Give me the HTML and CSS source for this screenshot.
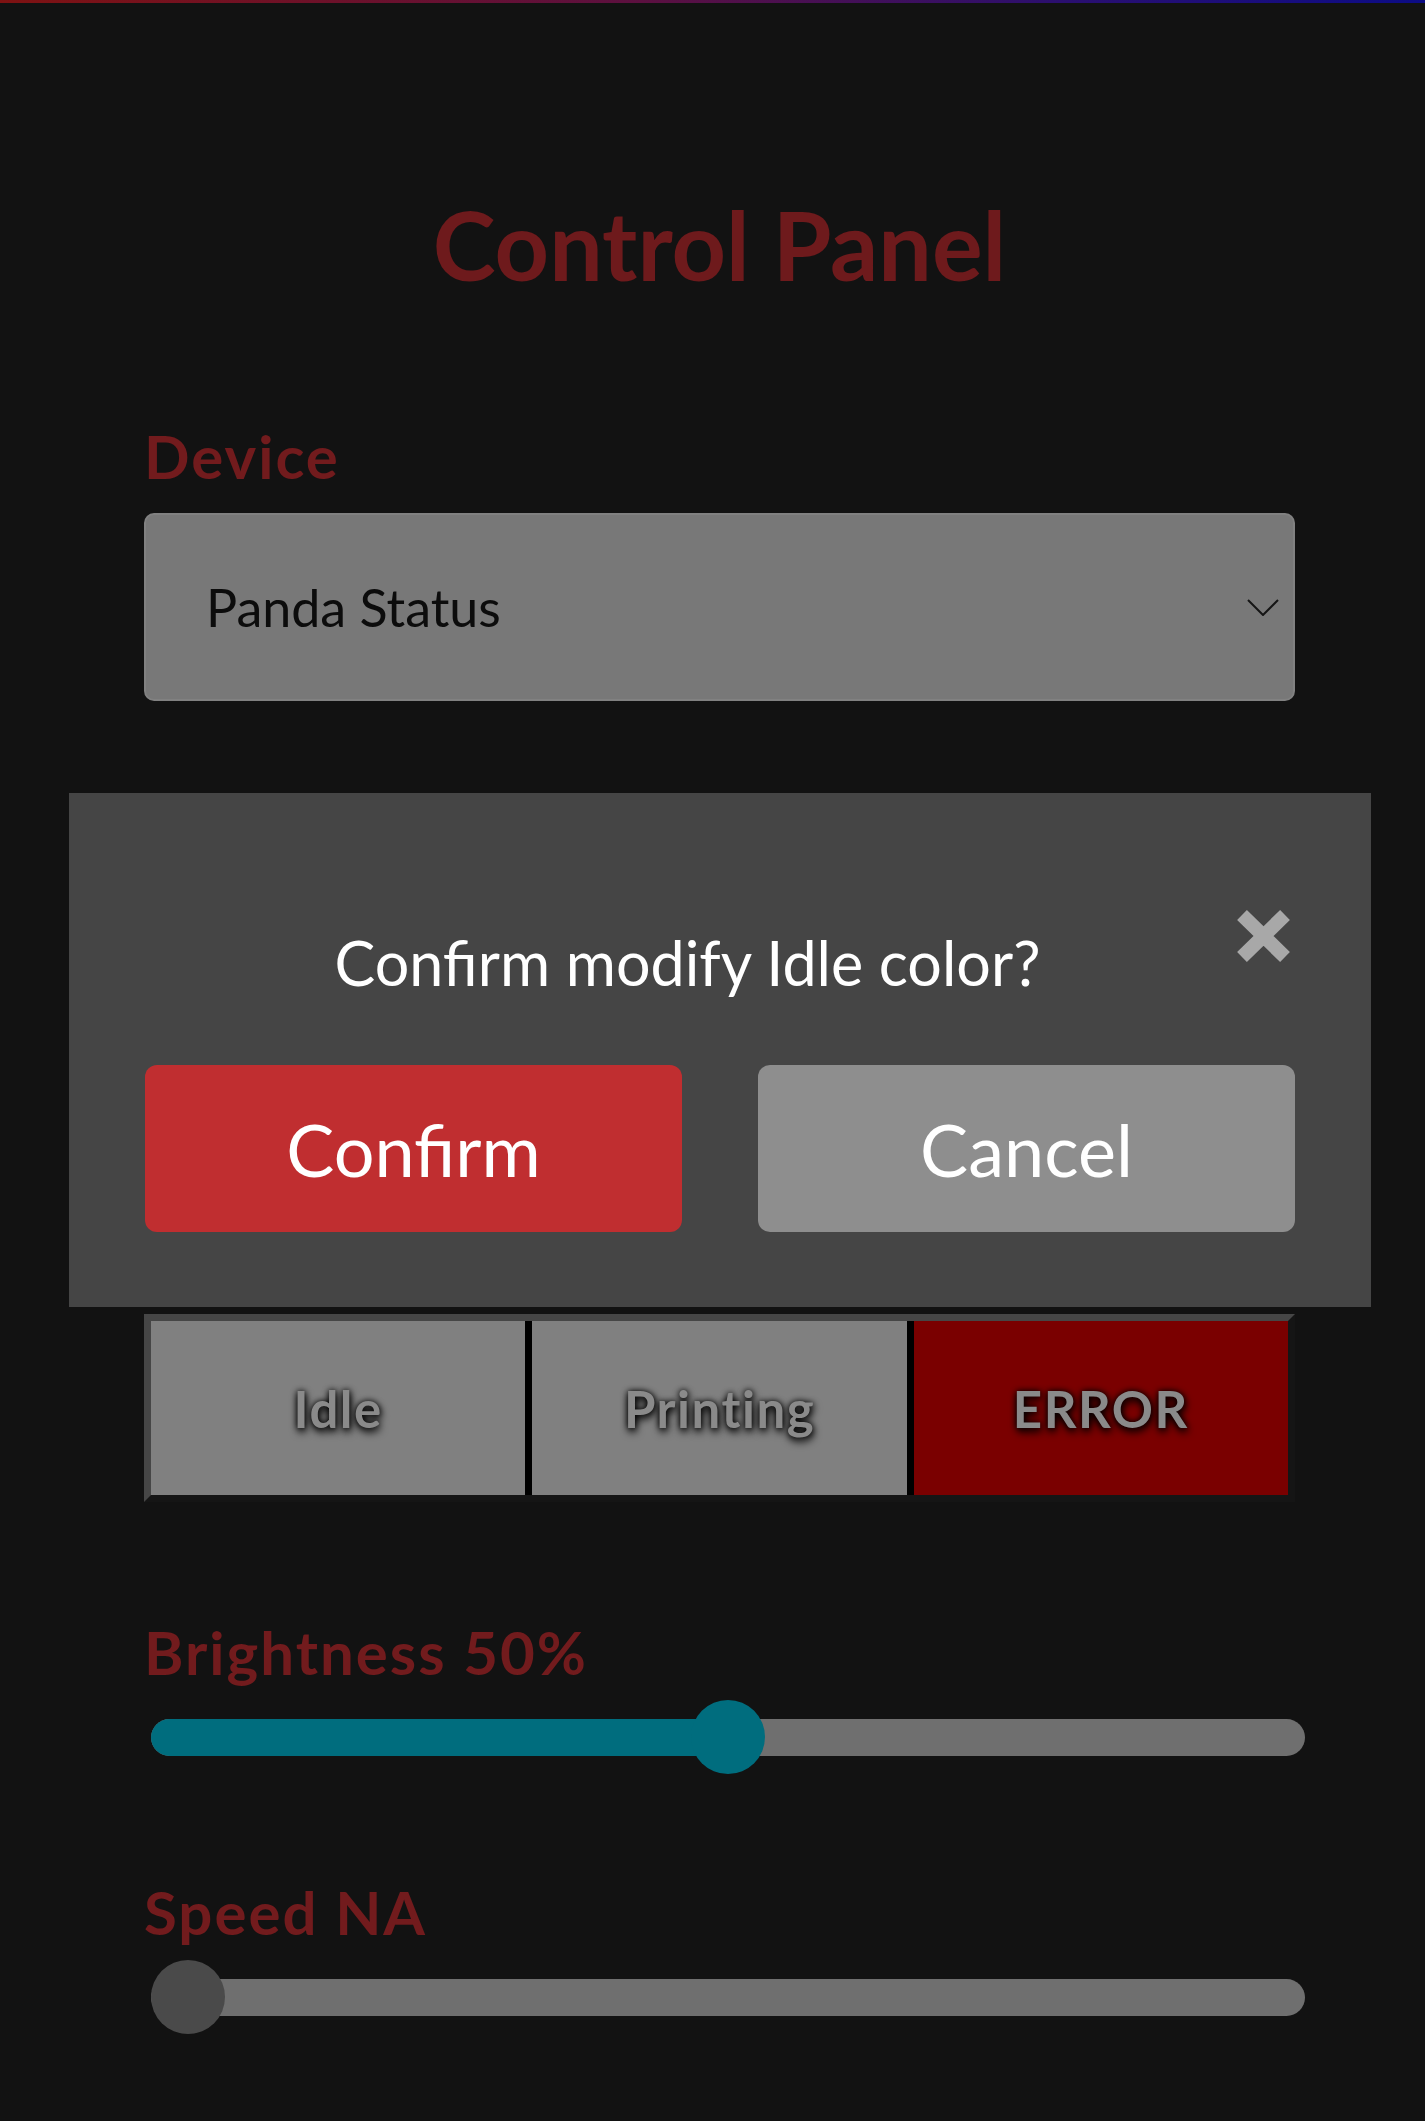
FILE: index.html
```html
<!DOCTYPE html>
<html lang="en">
<head>
<meta charset="utf-8">
<title>Control Panel</title>
<link rel="stylesheet" href="styles.css">
</head>
<body>
<div class="topbar"></div>
<main class="page">
  <h1 class="title">Control Panel</h1>

  <label class="label label-device">Device</label>
  <div class="select">
    <span class="select-text">Panda Status</span>
    <svg class="chev" width="32" height="17" viewBox="0 0 32 17"><polyline points="1,1 16,16 31,1" fill="none" stroke="#151515" stroke-width="2"/></svg>
  </div>

  <div class="status-group">
    <div class="status">Idle</div>
    <div class="status">Printing</div>
    <div class="status status-error">ERROR</div>
  </div>

  <label class="label label-bright">Brightness 50%</label>
  <div class="slider">
    <div class="track"><div class="fill" style="width:50%"></div></div>
    <div class="thumb thumb-active" style="left:calc((100% - 74px) * 0.5)"></div>
  </div>

  <label class="label label-speed">Speed NA</label>
  <div class="slider">
    <div class="track"></div>
    <div class="thumb thumb-off" style="left:0"></div>
  </div>
</main>

<div class="modal">
  <div class="modal-head">
    <p class="modal-text">Confirm modify Idle color?</p>
    <svg class="close" width="53" height="52" viewBox="0 0 53 52"><path d="M5 5 L48 47 M48 5 L5 47" stroke="#a8a8a8" stroke-width="14" stroke-linecap="butt"/></svg>
  </div>
  <div class="modal-actions">
    <button class="btn btn-confirm">Confirm</button>
    <button class="btn btn-cancel">Cancel</button>
  </div>
</div>
</body>
</html>
```

FILE: styles.css
```css
html, body {
  margin: 0;
  padding: 0;
  background: #121212;
}
body {
  font-family: Lato, "Noto Sans", sans-serif;
  position: relative;
  min-height: 2121px;
}
.topbar {
  height: 3px;
  background: linear-gradient(90deg, #7e1212 0%, #5c1040 45%, #2a0f70 75%, #0c0c86 100%);
}
.page {
  padding: 0 130px 0 144px;
  display: flex;
  flex-direction: column;
}
.title {
  margin: 194px 0 0 0;
  font-size: 95px;
  line-height: 1;
  font-weight: 700;
  text-align: center;
  color: #6e1a1c;
}
.label {
  display: block;
  font-size: 60px;
  line-height: 1;
  font-weight: 700;
  letter-spacing: 2px;
  color: #721b1d;
}
.label-device { margin-top: 134px; }
.select {
  margin-top: 27px;
  height: 184px;
  box-sizing: content-box;
  border: 2px solid #818181;
  border-radius: 10px;
  background: #787878;
  display: flex;
  align-items: center;
  justify-content: space-between;
  padding: 0 14px 0 60px;
}
.select-text {
  font-size: 52px;
  color: #0c0c0c;
}
.chev { display: block; }
.status-group {
  margin-top: 613px;
  border-style: solid;
  border-width: 7px;
  border-color: #464646 #151515 #151515 #464646;
  background: #000;
  display: flex;
  gap: 7px;
  height: 174px;
}
.status {
  flex: 1;
  background: #808080;
  display: flex;
  align-items: center;
  justify-content: center;
  font-size: 51px;
  font-weight: 700;
  letter-spacing: 1.5px;
  color: #8a8a8a;
  text-shadow: 1px 4px 8px #000, 0 0 6px #000;
}
.status-error { background: #7a0000; }
.label-bright { margin-top: 120px; }
.label-speed { margin-top: 108px; }
.slider {
  margin-top: 18px;
  margin-left: 7px;
  width: 1154px;
  height: 74px;
  position: relative;
  display: flex;
  align-items: center;
}
.track {
  width: 100%;
  height: 37px;
  border-radius: 19px;
  background: #6f6f6f;
  overflow: hidden;
}
.fill {
  height: 100%;
  background: #006d7e;
}
.thumb {
  position: absolute;
  top: 0;
  width: 74px;
  height: 74px;
  border-radius: 50%;
}
.thumb-active { background: #006d7e; }
.thumb-off { background: #4a4a4a; }

.modal {
  position: absolute;
  top: 793px;
  left: 69px;
  width: 1302px;
  height: 514px;
  box-sizing: border-box;
  background: #454545;
  padding: 117px 76px 0 76px;
}
.modal-head {
  display: flex;
  align-items: flex-start;
}
.modal-text {
  flex: 1;
  margin: 22px 0 0 0;
  text-align: center;
  font-size: 61px;
  line-height: 1;
  color: #ffffff;
}
.close {
  display: block;
  margin: 0 5px 0 7px;
}
.modal-actions {
  margin-top: 72px;
  display: flex;
  gap: 76px;
}
.btn {
  flex: 1;
  height: 167px;
  border: none;
  border-radius: 12px;
  font-family: Lato, "Noto Sans", sans-serif;
  font-size: 72px;
  color: #ffffff;
  padding: 0;
}
.btn-confirm { background: #c02e30; }
.btn-cancel { background: #8e8e8e; }
```
